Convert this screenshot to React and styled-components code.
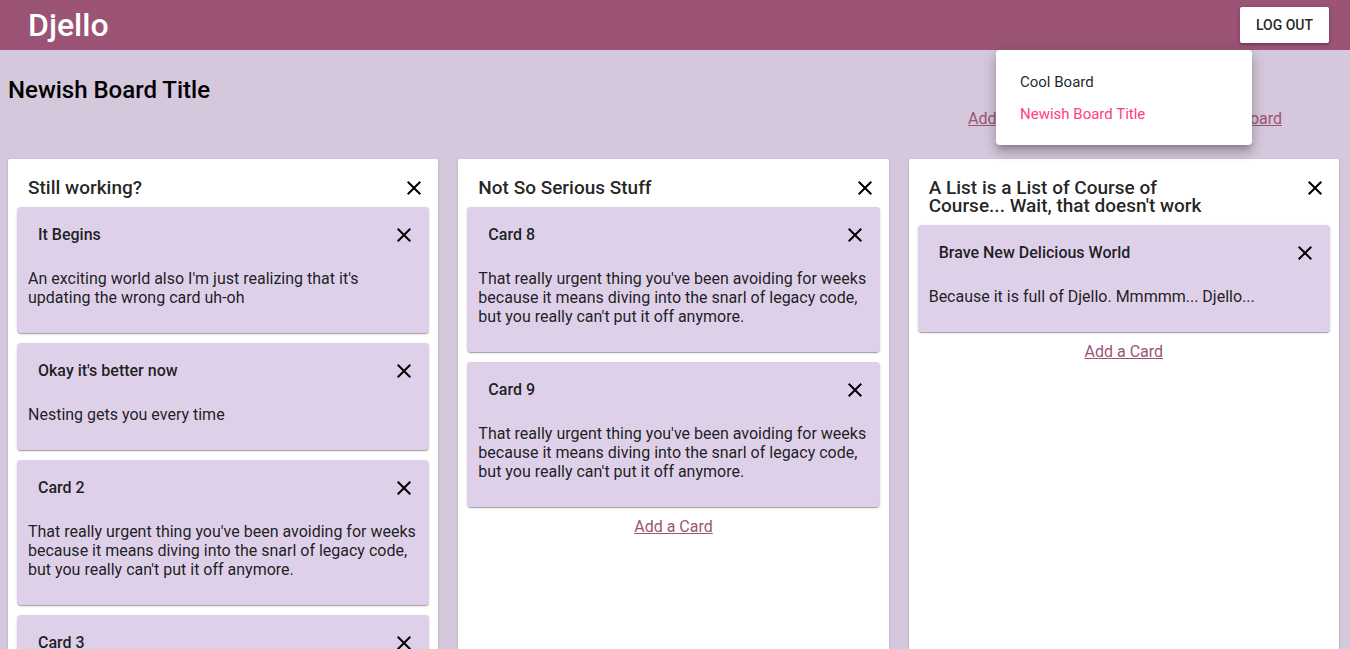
import styled, { createGlobalStyle } from "styled-components";

const GlobalStyle = createGlobalStyle`
  body {
    margin: 0;
    background: #d6c8dc;
    font-family: Roboto, "Liberation Sans", Arial, sans-serif;
    color: rgba(0, 0, 0, 0.87);
  }
`;

const urgent =
  "That really urgent thing you've been avoiding for weeks because it means diving into the snarl of legacy code, but you really can't put it off anymore.";

const lists = [
  {
    title: "Still working?",
    cards: [
      {
        title: "It Begins",
        text: "An exciting world also I'm just realizing that it's updating the wrong card uh-oh",
      },
      { title: "Okay it's better now", text: "Nesting gets you every time" },
      { title: "Card 2", text: urgent },
      { title: "Card 3", text: urgent },
    ],
  },
  {
    title: "Not So Serious Stuff",
    cards: [
      { title: "Card 8", text: urgent },
      { title: "Card 9", text: urgent },
    ],
  },
  {
    title: "A List is a List of Course of Course... Wait, that doesn't work",
    cards: [
      {
        title: "Brave New Delicious World",
        text: "Because it is full of Djello. Mmmmm... Djello...",
      },
    ],
  },
];

function CloseIcon() {
  return (
    <svg width="24" height="24" viewBox="0 0 24 24" fill="currentColor">
      <path d="M19 6.41L17.59 5 12 10.59 6.41 5 5 6.41 10.59 12 5 17.59 6.41 19 12 13.41 17.59 19 19 17.59 13.41 12z" />
    </svg>
  );
}

function App() {
  return (
    <>
      <GlobalStyle />
      <AppBar>
        <Logo>Djello</Logo>
        <LogoutButton>Log out</LogoutButton>
      </AppBar>
      <Main>
        <BoardHeader>
          <BoardTitle>Newish Board Title</BoardTitle>
          <BoardLinks>
            <TextLink href="#">Add a List</TextLink>
            <TextLink href="#">Delete Board</TextLink>
          </BoardLinks>
        </BoardHeader>
        <Lists>
          {lists.map((list) => (
            <ListPanel key={list.title}>
              <ListHeader>
                <ListTitle>{list.title}</ListTitle>
                <IconButton>
                  <CloseIcon />
                </IconButton>
              </ListHeader>
              {list.cards.map((card) => (
                <Card key={card.title}>
                  <CardHeader>
                    <CardTitle>{card.title}</CardTitle>
                    <IconButton>
                      <CloseIcon />
                    </IconButton>
                  </CardHeader>
                  <CardBody>{card.text}</CardBody>
                </Card>
              ))}
              <AddCard>
                <TextLink href="#">Add a Card</TextLink>
              </AddCard>
            </ListPanel>
          ))}
        </Lists>
      </Main>
      <Dropdown>
        <MenuItem>Cool Board</MenuItem>
        <MenuItem active>Newish Board Title</MenuItem>
      </Dropdown>
    </>
  );
}

export default App;

const AppBar = styled.header`
  height: 50px;
  background: #9b5476;
  display: flex;
  align-items: center;
  justify-content: space-between;
  padding: 0 21px 0 28px;
  box-sizing: border-box;
`;

const Logo = styled.h1`
  margin: 0;
  color: #fff;
  font-size: 32px;
  font-weight: 500;
  line-height: 1;
`;

const LogoutButton = styled.button`
  width: 89px;
  height: 36px;
  border: none;
  border-radius: 2px;
  background: #fff;
  font-family: Roboto, "Liberation Sans", sans-serif;
  font-size: 14px;
  font-weight: 500;
  text-transform: uppercase;
  color: rgba(0, 0, 0, 0.87);
  box-shadow: 0 1px 5px rgba(0, 0, 0, 0.2), 0 2px 2px rgba(0, 0, 0, 0.14);
`;

const Main = styled.main`
  padding: 8px 11px 8px 8px;
`;

const BoardHeader = styled.div`
  height: 101px;
  display: flex;
  justify-content: space-between;
  align-items: flex-start;
`;

const BoardTitle = styled.h2`
  margin: 18px 0 0;
  font-size: 24px;
  font-weight: 500;
  line-height: 28px;
  color: #000;
`;

const BoardLinks = styled.div`
  width: 314px;
  margin: 51px 57px 0 0;
  display: flex;
  justify-content: space-between;
`;

const TextLink = styled.a`
  font-size: 16px;
  line-height: 19px;
  color: #9b5476;
  text-decoration: underline;
`;

const Lists = styled.div`
  display: grid;
  grid-template-columns: repeat(3, 1fr);
  gap: 20px;
`;

const ListPanel = styled.section`
  background: #fff;
  border-radius: 2px;
  padding: 19px 9px 16px;
  box-shadow: 0 2px 1px -1px rgba(0, 0, 0, 0.2), 0 1px 1px rgba(0, 0, 0, 0.14),
    0 1px 3px rgba(0, 0, 0, 0.12);
`;

const IconButton = styled.span`
  display: flex;
  width: 24px;
  height: 24px;
  color: #000;
  cursor: pointer;
`;

const ListHeader = styled.div`
  display: flex;
  justify-content: space-between;
  align-items: flex-start;
  padding: 1px 3px 0 11px;
  margin-bottom: 10px;
  ${IconButton} {
    margin: -3px 0;
  }
`;

const ListTitle = styled.h3`
  margin: 0;
  max-width: 290px;
  font-size: 19px;
  font-weight: 500;
  line-height: 18px;
  color: rgba(0, 0, 0, 0.87);
`;

const Card = styled.article`
  background: #ddd0e8;
  border-radius: 4px;
  margin-bottom: 10px;
  box-shadow: 0 2px 1px -1px rgba(0, 0, 0, 0.2), 0 1px 1px rgba(0, 0, 0, 0.14),
    0 1px 3px rgba(0, 0, 0, 0.12);
`;

const CardHeader = styled.div`
  height: 54px;
  box-sizing: border-box;
  display: flex;
  justify-content: space-between;
  align-items: center;
  padding: 2px 13px 0 21px;
`;

const CardTitle = styled.h4`
  margin: 0;
  font-size: 16px;
  font-weight: 500;
  line-height: 22px;
`;

const CardBody = styled.p`
  margin: 0;
  padding: 8px 11px 26px;
  font-size: 16px;
  line-height: 19px;
`;

const AddCard = styled.div`
  text-align: center;
`;

const Dropdown = styled.ul`
  position: absolute;
  top: 50px;
  left: 996px;
  width: 256px;
  margin: 0;
  padding: 16px 0 15px;
  list-style: none;
  background: #fff;
  border-radius: 4px;
  box-shadow: 0 5px 5px -3px rgba(0, 0, 0, 0.2), 0 8px 10px 1px rgba(0, 0, 0, 0.14),
    0 3px 14px 2px rgba(0, 0, 0, 0.12);
`;

const MenuItem = styled.li`
  height: 32px;
  display: flex;
  align-items: center;
  padding: 0 24px;
  font-size: 15px;
  color: ${(p) => (p.active ? "#ff4081" : "rgba(0, 0, 0, 0.87)")};
`;
